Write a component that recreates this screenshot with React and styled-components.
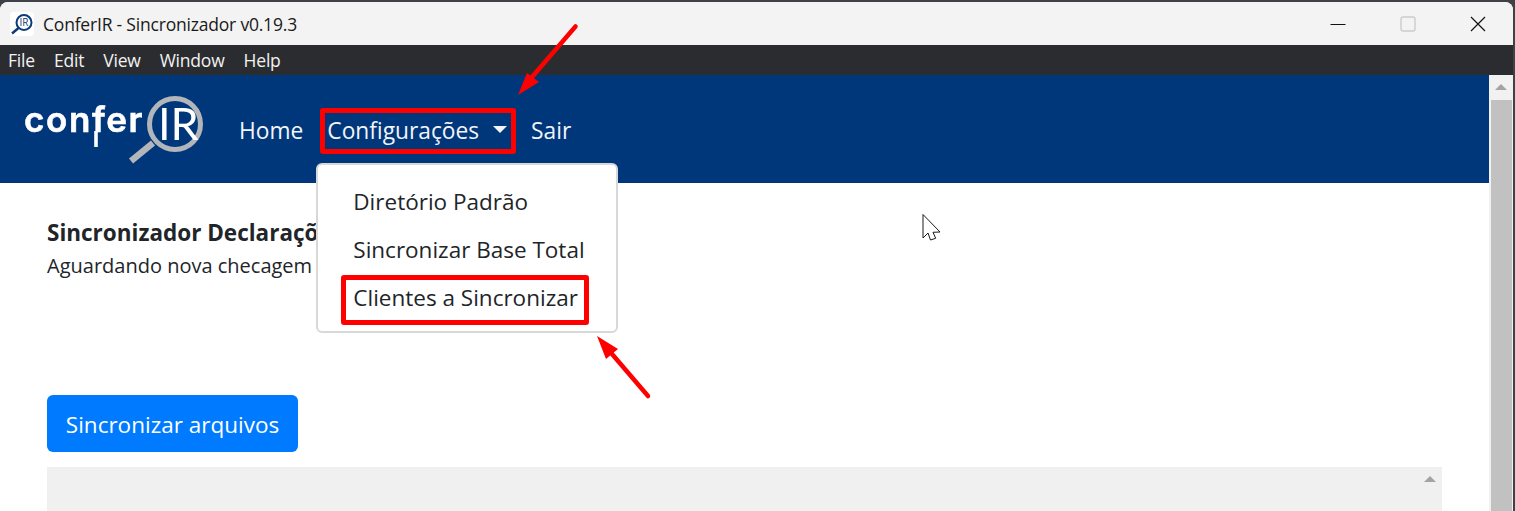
import React from "react";
import styled, { createGlobalStyle } from "styled-components";

const GlobalStyle = createGlobalStyle`
  html, body {
    margin: 0;
    padding: 0;
    height: 100%;
    overflow: hidden;
    background: #3e4247;
  }
  * {
    box-sizing: border-box;
  }
`;

const FONT = `"Open Sans", "Noto Sans", sans-serif`;

const Screen = styled.div`
  position: relative;
  width: 1515px;
  height: 511px;
  padding: 2px 2px 0 0;
  overflow: hidden;
  font-family: ${FONT};
  background: #3e4247;
`;

const Win = styled.div`
  display: flex;
  flex-direction: column;
  height: 100%;
  border-radius: 8px 8px 0 0;
  overflow: hidden;
  background: #fff;
`;

const TitleBar = styled.div`
  display: flex;
  align-items: center;
  flex: 0 0 43px;
  padding-left: 10px;
  background: #f3f3f3;
  color: #1a1a1a;
  font-size: 17.5px;
`;

const TitleText = styled.span`
  margin-left: 9px;
  letter-spacing: -0.2px;
`;

const WinButtons = styled.div`
  display: flex;
  align-items: center;
  margin-left: auto;
  padding-right: 27px;
  gap: 54px;
`;

const MenuBar = styled.div`
  display: flex;
  align-items: center;
  flex: 0 0 30px;
  gap: 19px;
  padding-left: 8px;
  background: #2b2c2f;
  color: #f2f2f2;
  font-size: 17.5px;
  letter-spacing: -0.2px;
`;

const Body = styled.div`
  display: flex;
  flex: 1;
  min-height: 0;
`;

const Page = styled.div`
  flex: 1;
  min-width: 0;
  display: flex;
  flex-direction: column;
`;

const Navbar = styled.nav`
  display: flex;
  align-items: center;
  flex: 0 0 108px;
  padding-left: 24px;
  background: #00377b;
`;

const LogoLink = styled.a`
  display: block;
  margin-right: 23px;
  height: 70px;
`;

const NavItem = styled.div`
  position: relative;
  display: flex;
  align-items: center;
  height: 60px;
  margin-top: 2px;
  padding: 0 12px;
  color: #f2f4f8;
  font-size: 22.75px;
  white-space: nowrap;
`;

const Caret = styled.span`
  display: inline-block;
  margin-left: 14px;
  margin-bottom: 2px;
  border-top: 7px solid currentColor;
  border-left: 7px solid transparent;
  border-right: 7px solid transparent;
`;

const Dropdown = styled.div`
  position: absolute;
  top: 63px;
  left: 1px;
  z-index: 5;
  width: 302px;
  height: 170px;
  padding: 12px 0;
  background: #fff;
  border: 2px solid #d8d8d8;
  border-radius: 6px;
  color: #212529;
`;

const DropdownItem = styled.div`
  display: flex;
  align-items: center;
  height: 48px;
  padding-left: 35px;
  font-size: 22.5px;
`;

const Content = styled.main`
  flex: 1;
  min-height: 0;
  padding: 32px 47px 0;
  color: #212529;
`;

const Heading = styled.div`
  font-size: 22.5px;
  font-weight: 700;
  line-height: 36px;
  white-space: nowrap;
`;

const Status = styled.div`
  font-size: 20px;
  line-height: 30px;
  white-space: nowrap;
`;

const SyncButton = styled.button`
  display: block;
  width: 251px;
  height: 57px;
  margin-top: 114px;
  padding: 2px 0 0;
  border: 0;
  border-radius: 6px;
  background: #007bff;
  color: #fff;
  font-family: inherit;
  font-size: 22.5px;
`;

const LogPanel = styled.div`
  display: flex;
  justify-content: flex-end;
  height: 60px;
  margin-top: 15px;
  padding: 9px 6px 0 0;
  background: #f0f0f0;
`;

const ScrollArrow = styled.span`
  display: block;
  width: 0;
  height: 0;
  border-bottom: 6px solid #a3a3a3;
  border-left: 6px solid transparent;
  border-right: 6px solid transparent;
`;

const ScrollBar = styled.div`
  display: flex;
  flex-direction: column;
  align-items: center;
  flex: 0 0 24px;
  padding-top: 9px;
  background: #f1f1f1;
`;

const ScrollThumb = styled.div`
  flex: 1;
  width: 21px;
  margin-top: 10px;
  background: #c1c1c1;
`;

// red marks drawn over the screenshot
const Highlight = styled.div`
  position: absolute;
  z-index: 10;
  left: ${(p) => p.$left}px;
  top: ${(p) => p.$top}px;
  width: ${(p) => p.$width}px;
  height: ${(p) => p.$height}px;
  border: 5px solid #ff0000;
  border-radius: 3px;
`;

const Overlay = styled.svg`
  position: absolute;
  z-index: 10;
  left: ${(p) => p.$left}px;
  top: ${(p) => p.$top}px;
`;

const AppIcon = () => (
  <svg width="24" height="24" viewBox="0 0 24 24">
    <rect width="24" height="24" rx="4" fill="#fff" />
    <circle cx="14" cy="10.5" r="7.5" fill="none" stroke="#0d3a78" strokeWidth="2" />
    <line x1="8.5" y1="16" x2="2" y2="21.5" stroke="#0d3a78" strokeWidth="2.4" />
    <text x="14" y="14" fontSize="10" fontFamily="Open Sans" fill="#0d3a78" textAnchor="middle">
      IR
    </text>
  </svg>
);

const Logo = () => (
  <svg width="180" height="70" viewBox="0 0 180 70" style={{ filter: "blur(0.4px)" }}>
    <text
      x="0"
      y="38"
      fontFamily="Inter"
      fontWeight="600"
      fontSize="35"
      letterSpacing="1.6"
      fill="#fff"
      stroke="#fff"
      strokeWidth="0.6"
    >
      confer
    </text>
    <line x1="72" y1="37" x2="72" y2="53" stroke="#fff" strokeWidth="3.6" />
    <circle cx="151" cy="30" r="25.5" fill="none" stroke="#b2b5b9" strokeWidth="5" />
    <line x1="129" y1="49" x2="107" y2="67" stroke="#b2b5b9" strokeWidth="6.5" />
    <text x="134" y="46" fontFamily="Lato" fontWeight="400" fontSize="45" fill="#fff">
      IR
    </text>
  </svg>
);

const MinimizeIcon = () => (
  <svg width="16" height="16" viewBox="0 0 16 16">
    <line x1="0.5" y1="8.5" x2="15.5" y2="8.5" stroke="#111" />
  </svg>
);

const MaximizeIcon = () => (
  <svg width="16" height="16" viewBox="0 0 16 16">
    <rect x="1" y="1" width="14" height="14" rx="2" fill="none" stroke="#cbcbcb" strokeWidth="1.4" />
  </svg>
);

const CloseIcon = () => (
  <svg width="16" height="16" viewBox="0 0 16 16">
    <path d="M1 1 L15 15 M15 1 L1 15" stroke="#111" strokeWidth="1.2" />
  </svg>
);

const menus = ["File", "Edit", "View", "Window", "Help"];
const configItems = ["Diretório Padrão", "Sincronizar Base Total", "Clientes a Sincronizar"];

export default function App() {
  return (
    <Screen>
      <GlobalStyle />
      <Win>
        <TitleBar>
          <AppIcon />
          <TitleText>ConferIR - Sincronizador v0.19.3</TitleText>
          <WinButtons>
            <MinimizeIcon />
            <MaximizeIcon />
            <CloseIcon />
          </WinButtons>
        </TitleBar>
        <MenuBar>
          {menus.map((m) => (
            <span key={m}>{m}</span>
          ))}
        </MenuBar>
        <Body>
          <Page>
            <Navbar>
              <LogoLink>
                <Logo />
              </LogoLink>
              <NavItem>Home</NavItem>
              <NavItem>
                Configurações
                <Caret />
                <Dropdown>
                  {configItems.map((item) => (
                    <DropdownItem key={item}>{item}</DropdownItem>
                  ))}
                </Dropdown>
              </NavItem>
              <NavItem>Sair</NavItem>
            </Navbar>
            <Content>
              <Heading>Sincronizador Declarações</Heading>
              <Status>Aguardando nova checagem</Status>
              <SyncButton>Sincronizar arquivos</SyncButton>
              <LogPanel>
                <ScrollArrow />
              </LogPanel>
            </Content>
          </Page>
          <ScrollBar>
            <ScrollArrow />
            <ScrollThumb />
          </ScrollBar>
        </Body>
      </Win>

      <Highlight $left={320} $top={108} $width={196} $height={46} />
      <Highlight $left={341} $top={275} $width={248} $height={50} />

      <Overlay $left={510} $top={20} width="75" height="80" viewBox="510 20 75 80">
        <line x1="575.5" y1="26.5" x2="532" y2="77" stroke="#ff0000" strokeWidth="4.5" strokeLinecap="round" />
        <polygon points="518,95 527,73 539,82" fill="#ff0000" />
      </Overlay>
      <Overlay $left={590} $top={330} width="65" height="75" viewBox="590 330 65 75">
        <line x1="648" y1="396" x2="612" y2="354" stroke="#ff0000" strokeWidth="4.5" strokeLinecap="round" />
        <polygon points="597,336 606,359 618,349" fill="#ff0000" />
      </Overlay>
      <Overlay $left={921} $top={213} width="22" height="30" viewBox="0 0 22 30">
        <path
          d="M2 1.5 L2 25 L7 20 L9.5 27 L14.7 25.3 L12 19.3 L19 19 Z"
          fill="#fff"
          stroke="#1a1a1a"
          strokeWidth="1"
        />
      </Overlay>
    </Screen>
  );
}
